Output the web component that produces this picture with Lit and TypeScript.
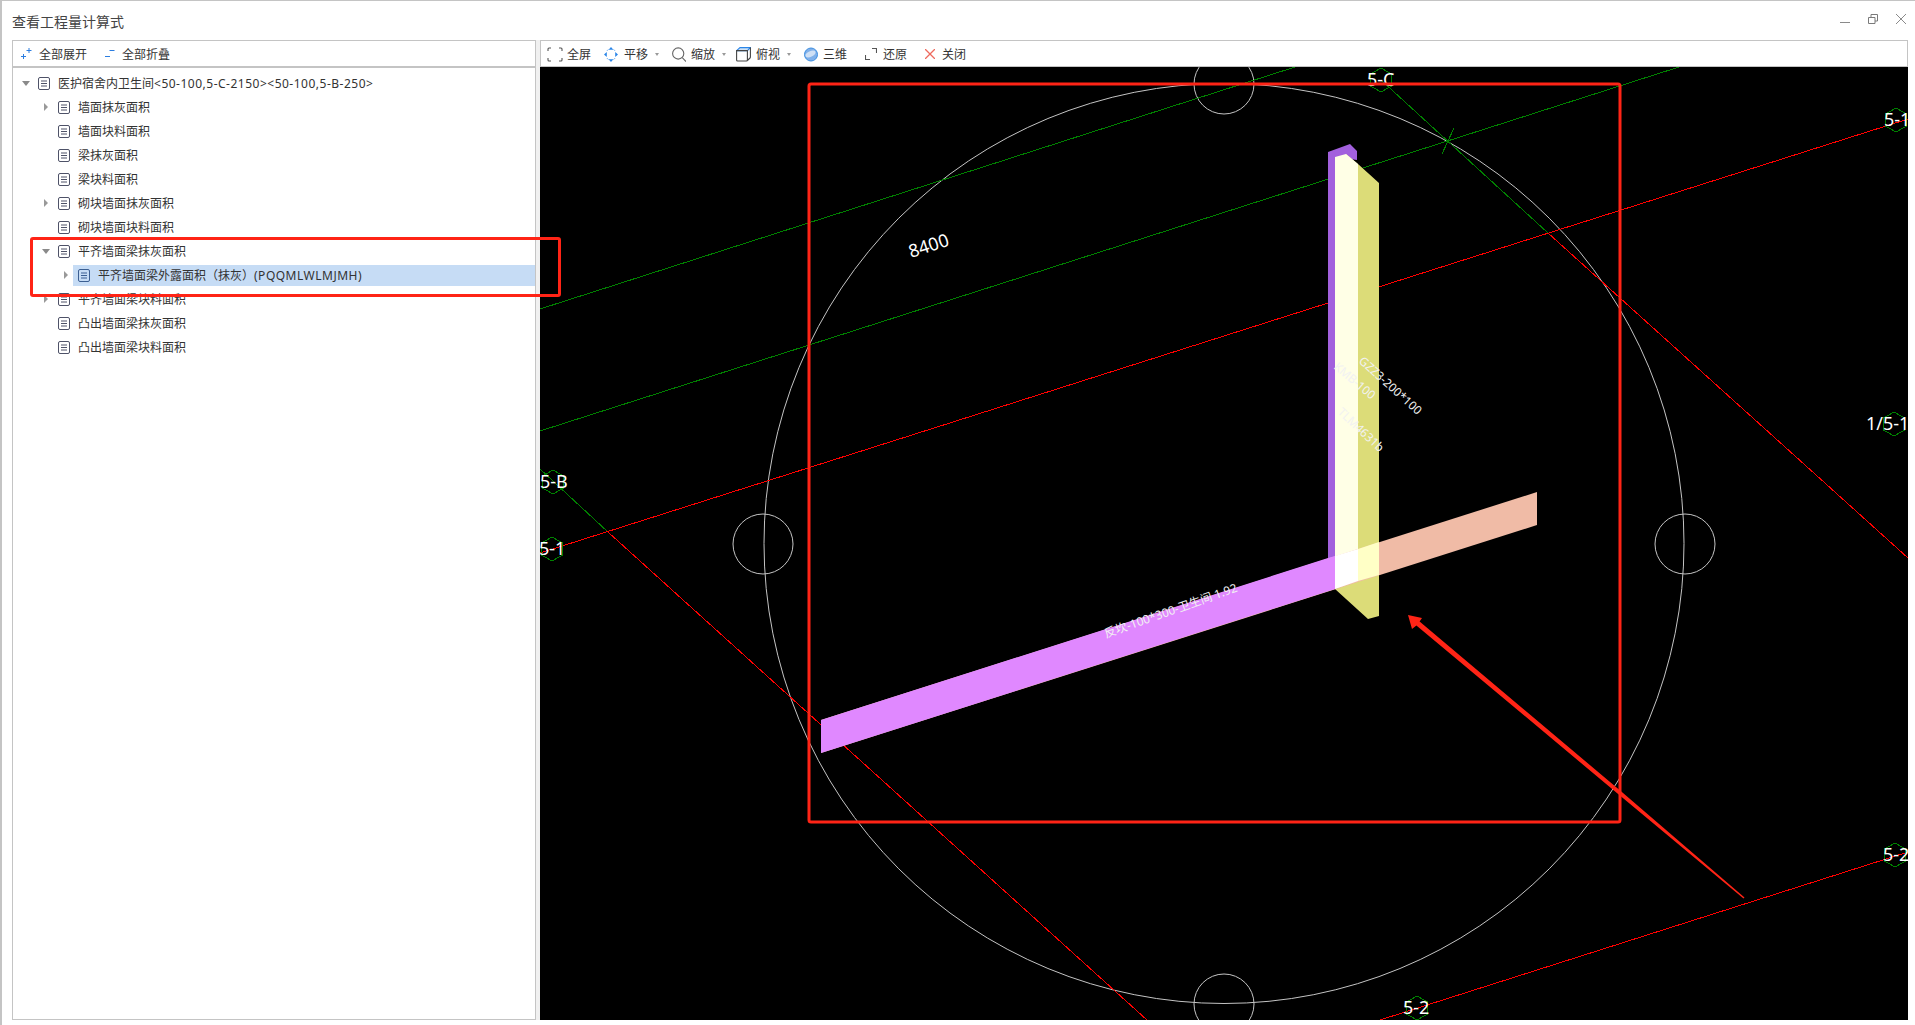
import { LitElement, css, html, svg } from "lit";
import { customElement } from "lit/decorators.js";

interface TreeNode {
  label: string;
  depth: number;
  arrow?: "open" | "closed";
  selected?: boolean;
}

const TREE: TreeNode[] = [
  { label: "医护宿舍内卫生间<50-100,5-C-2150><50-100,5-B-250>", depth: 0, arrow: "open" },
  { label: "墙面抹灰面积", depth: 1, arrow: "closed" },
  { label: "墙面块料面积", depth: 1 },
  { label: "梁抹灰面积", depth: 1 },
  { label: "梁块料面积", depth: 1 },
  { label: "砌块墙面抹灰面积", depth: 1, arrow: "closed" },
  { label: "砌块墙面块料面积", depth: 1 },
  { label: "平齐墙面梁抹灰面积", depth: 1, arrow: "open" },
  { label: "平齐墙面梁外露面积（抹灰）(PQQMLWLMJMH)", depth: 2, arrow: "closed", selected: true },
  { label: "平齐墙面梁块料面积", depth: 1, arrow: "closed" },
  { label: "凸出墙面梁抹灰面积", depth: 1 },
  { label: "凸出墙面梁块料面积", depth: 1 },
];

const ICONS = {
  expand: html`<svg width="11" height="12" viewBox="0 0 11 12" fill="none" stroke="#2b7de0"><path d="M5.500 2.500h5M8 0v5M0 8.500h5M2.500 6v5"/></svg>`,
  collapse: html`<svg width="10" height="12" viewBox="0 0 10 12" fill="none" stroke="#2b7de0"><path d="M4.500 2.500h5M0 8.500h5"/></svg>`,
  full: html`<svg width="16" height="15" viewBox="0 0 16 15" fill="none" stroke="#555" stroke-width="1.100"><path d="M1 4V2q0-1 1-1h2M12 1h2q1 0 1 1v2M15 11v2q0 1-1 1h-2M4 14H2q-1 0-1-1v-2"/></svg>`,
  pan: html`<svg width="14" height="15" viewBox="0 0 14 15"><path d="M7 0l2.400 2.800H4.600zM7 15l-2.400-2.800h4.800zM0 7.500l2.800-2.400v4.800zM14 7.500l-2.800 2.400V5.100z" fill="#2b86e8"/><path d="M3.200 3.600l1-1M9.800 2.600l1 1M3.200 11.400l1 1M9.800 12.400l1-1" stroke="#2b86e8" fill="none"/></svg>`,
  zoom: html`<svg width="14" height="15" viewBox="0 0 14 15" fill="none" stroke="#666" stroke-width="1.100"><circle cx="6.200" cy="6.500" r="5.600"/><path d="M10.300 10.700L14 14.500"/></svg>`,
  cube: html`<svg width="15" height="15" viewBox="0 0 15 15" fill="none" stroke-width="1.100"><path d="M4 .6h10.400l-3 3H.6z" fill="#cfe2f6" stroke="#2b86e8"/><path d="M.6 3.600h10.800V13q0 1-1 1H1.600q-1 0-1-1z" stroke="#444"/><path d="M14.400 .6V10q0 .6-.4 1l-2.600 2.500" stroke="#444"/></svg>`,
  sphere: html`<svg width="14" height="15" viewBox="0 0 14 15"><circle cx="7" cy="7.500" r="6.500" fill="#7fb0ea" stroke="#3d8ee0"/><ellipse cx="6.500" cy="7" rx="5.500" ry="2.800" transform="rotate(-25 6.500 7)" fill="#cfe0f5"/></svg>`,
  restore: html`<svg width="12" height="12" viewBox="0 0 12 12" fill="none" stroke="#555" stroke-width="1.100"><path d="M.5 7v4.500h4.500M7 .5h4.500V5"/></svg>`,
  close: html`<svg width="10" height="10" viewBox="0 0 10 10" fill="none" stroke="#ee6a5e" stroke-width="1.300"><path d="M0 0l10 10M10 0L0 10"/></svg>`,
};

const TOOLS: { label: string; icon: unknown; caret?: boolean; cls: string }[] = [
  { label: "全屏", icon: ICONS.full, cls: "t-full" },
  { label: "平移", icon: ICONS.pan, caret: true, cls: "t-pan" },
  { label: "缩放", icon: ICONS.zoom, caret: true, cls: "t-zoom" },
  { label: "俯视", icon: ICONS.cube, caret: true, cls: "t-cube" },
  { label: "三维", icon: ICONS.sphere, cls: "t-sphere" },
  { label: "还原", icon: ICONS.restore, cls: "t-restore" },
  { label: "关闭", icon: ICONS.close, cls: "t-close" },
];

// axis bubbles: page coordinates of the centre, text anchor x
const AXES: { x: number; y: number; r: number; label: string; tx: number }[] = [
  { x: 1381, y: 80, r: 12, label: "5-C", tx: 1367 },
  { x: 1896, y: 120, r: 12, label: "5-1", tx: 1884 },
  { x: 1894, y: 424, r: 12, label: "1/5-1", tx: 1866 },
  { x: 553, y: 482, r: 12, label: "5-B", tx: 540 },
  { x: 552, y: 549, r: 12, label: "5-1", tx: 539 },
  { x: 1895, y: 855, r: 12, label: "5-2", tx: 1883 },
  { x: 1417, y: 1008, r: 12, label: "5-2", tx: 1403 },
];

function hexagon(cx: number, cy: number, r: number) {
  const pts: string[] = [];
  for (let i = 0; i < 6; i++) {
    const a = (Math.PI / 3) * i + Math.PI / 2;
    pts.push(`${cx + r * Math.cos(a)},${cy + r * Math.sin(a)}`);
  }
  return pts.join(" ");
}

// the latin runs of a label are set a little wider than the CJK ones
function labelRuns(text: string) {
  return text
    .split(/([\x21-\x7e]+)/)
    .map((part) => (/^[\x21-\x7e]+$/.test(part) ? html`<span class="latin">${part}</span>` : part));
}

@customElement("app-root")
export class AppRoot extends LitElement {
  private renderRow(n: TreeNode) {
    return html`
      <div class="row" style="padding-left:${6 + n.depth * 20}px">
        <span class="arrow ${n.arrow ?? ""}"></span>
        <div class="content ${n.selected ? "selected" : ""}">
          <svg class="doc" width="12" height="13" viewBox="0 0 12 13" fill="none" stroke="${n.selected ? "#3c5f92" : "#4e5268"}">
            <rect x=".5" y=".5" width="11" height="12" rx="1.500" />
            <path d="M3 4h6M3 6.500h6M3 9h6" />
          </svg>
          <span class="label">${labelRuns(n.label)}</span>
        </div>
      </div>
    `;
  }

  private renderScene() {
    return svg`
      <g fill="none" stroke-width="1">
        <circle cx="1224" cy="543.500" r="460" stroke="#c4c4c4" />
        <circle cx="763" cy="544" r="30" stroke="#c4c4c4" />
        <circle cx="1685" cy="544" r="30" stroke="#c4c4c4" />
        <circle cx="1224" cy="84" r="30" stroke="#c4c4c4" />
        <circle cx="1224" cy="1004" r="30" stroke="#c4c4c4" />

        <g shape-rendering="crispEdges">
          <path d="M540 309L1295 67M540 431L1679 67M540 469L608 532M1381 80L1548 233M1442 154L1454 128" stroke="#008000" />
          <path d="M540 553L1908 119M608 532L1147 1020M1548 233L1908 558M1380 1020L1908 852" stroke="#ff0000" />
        </g>
      </g>

      ${AXES.map(
        (a) => svg`
          <polygon points=${hexagon(a.x, a.y, a.r)} fill="none" stroke="#008000" shape-rendering="crispEdges" />
          <text class="axis" x=${a.tx} y=${a.y + 6}>${a.label}</text>
        `
      )}

      <polygon points="1328,152 1350,144 1357,151 1357,160 1335,157 1335,589 1328,585" fill="#a260dd" />
      <polygon points="1346,154 1358,164 1379,183 1379,616 1368,619 1335,589 1358,581" fill="#dcdc78" />
      <polygon points="1335,157 1346,154 1358,164 1358,581 1335,589" fill="#ffffe6" />

      <polygon points="821,720 1537,492 1537,525 821,753" fill="#f0bba6" />
      <polygon points="821,720 1328,558 1335,556 1335,589 821,753" fill="#e088ff" />
      <polygon points="1335,556 1358,549 1358,581 1335,589" fill="#ffffff" />
      <polygon points="1358,549 1379,542 1379,575 1358,581" fill="#ffffc6" />

      <text class="dim" transform="translate(911 258) rotate(-18)">8400</text>
      <text class="tag" transform="translate(1358 362) rotate(42)">GZZ3-200*100</text>
      <text class="tag" transform="translate(1333 368) rotate(40)">KMB-100</text>
      <text class="tag" transform="translate(1337 413) rotate(43)">TLM4631b</text>
      <text class="tag" transform="translate(1106 638) rotate(-19.500)">反坎-100*300-卫生间 1.92</text>

      <rect x="809" y="84" width="811" height="738" rx="2" fill="none" stroke="#ff2416" stroke-width="3" />
      <polygon
        points="1408,615 1422,618 1419.600,621.600 1621.300,791.500 1744.500,897.500 1743.500,898.500 1618.700,794.500 1416.400,625.400 1412,629"
        fill="#ff2416"
      />
    `;
  }

  render() {
    return html`
      <div class="window">
        <header class="titlebar">
          <span class="title">查看工程量计算式</span>
          <div class="controls">
            <svg width="10" height="10" viewBox="0 0 10 10"><path d="M0 8.500h10" stroke="#8a8a8a" /></svg>
            <svg width="10" height="10" viewBox="0 0 10 10" fill="none" stroke="#7a7a7a"><path d="M3 3V.500h6.500V7H7M.5 3.500H7v6H.5z" /></svg>
            <svg width="10" height="10" viewBox="0 0 10 10" fill="none" stroke="#8a8a8a"><path d="M0 0l10 10M10 0L0 10" /></svg>
          </div>
        </header>
        <div class="body">
          <section class="panel left">
            <div class="toolbar">
              <button class="tool expand">${ICONS.expand}<span>全部展开</span></button>
              <button class="tool collapse">${ICONS.collapse}<span>全部折叠</span></button>
            </div>
            <div class="tree">${TREE.map((n) => this.renderRow(n))}</div>
          </section>
          <div class="splitter"></div>
          <section class="panel right">
            <div class="toolbar">
              ${TOOLS.map(
                (t) => html`<button class="tool ${t.cls}">
                  ${t.icon}<span>${t.label}</span>${t.caret ? html`<i class="caret"></i>` : ""}
                </button>`
              )}
            </div>
            <svg class="canvas" viewBox="540 67 1368 953" width="1368" height="953">${this.renderScene()}</svg>
          </section>
        </div>
        <div class="callout"></div>
      </div>
    `;
  }

  static styles = css`
    :host {
      display: block;
      width: 1915px;
      height: 1025px;
      background: #fff;
      font-family: "Noto Sans", "Noto Sans CJK SC", sans-serif;
      font-size: 12px;
      color: #333;
      overflow: hidden;
    }
    .window {
      position: relative;
      box-sizing: border-box;
      height: 1025px;
      border-top: 1px solid #c4c4c4;
      border-left: 2px solid #c4c4c4;
      display: flex;
      flex-direction: column;
    }
    .titlebar {
      height: 39px;
      flex: none;
      display: flex;
      align-items: center;
      justify-content: space-between;
      padding: 0 9px 0 10px;
    }
    .title {
      font-size: 14px;
      color: #444;
    }
    .controls {
      display: flex;
      align-items: center;
      gap: 18px;
      margin-top: -3px;
    }
    .body {
      display: flex;
      padding-left: 10px;
      height: 980px;
    }
    .panel {
      box-sizing: border-box;
      display: flex;
      flex-direction: column;
    }
    .left {
      width: 524px;
      border: 1px solid #c4c4c4;
    }
    .splitter {
      width: 4px;
      flex: none;
      background: #f0f0f0;
    }
    .right {
      width: 1368px;
    }
    .toolbar {
      flex: none;
      display: flex;
      align-items: center;
      height: 24px;
      padding-top: 1px;
    }
    .left .toolbar {
      border-bottom: 2px solid #c4c4c4;
      padding-left: 8px;
    }
    .right .toolbar {
      border: 1px solid #c4c4c4;
      padding-left: 6px;
    }
    .tool {
      all: unset;
      display: inline-flex;
      align-items: center;
      white-space: nowrap;
    }
    .tool svg {
      flex: none;
    }
    .expand {
      gap: 7px;
      margin-right: 18px;
    }
    .collapse {
      gap: 7px;
    }
    .t-full {
      gap: 4px;
      margin-right: 13px;
    }
    .t-pan {
      gap: 6px;
      margin-right: 13px;
    }
    .t-zoom {
      gap: 5px;
      margin-right: 10px;
    }
    .t-cube {
      gap: 5px;
      margin-right: 13px;
    }
    .t-sphere {
      gap: 5px;
      margin-right: 18px;
    }
    .t-restore {
      gap: 6px;
      margin-right: 18px;
    }
    .t-close {
      gap: 7px;
    }
    .caret {
      width: 0;
      height: 0;
      margin-left: 1px;
      border: 2.5px solid transparent;
      border-top: 3px solid #999;
      border-bottom: 0;
    }
    .t-zoom .caret,
    .t-cube .caret {
      margin-left: 2px;
    }
    .canvas {
      display: block;
      background: #000;
      flex: none;
    }
    .tree {
      padding-top: 3px;
    }
    .row {
      height: 24px;
      display: flex;
      align-items: center;
    }
    .arrow {
      width: 14px;
      height: 14px;
      flex: none;
      display: flex;
      align-items: center;
      justify-content: center;
    }
    .arrow.closed::before {
      content: "";
      border-left: 4px solid #999;
      border-top: 4px solid transparent;
      border-bottom: 4px solid transparent;
    }
    .arrow.open::before {
      content: "";
      border-top: 5px solid #8a8a8a;
      border-left: 4px solid transparent;
      border-right: 4px solid transparent;
    }
    .content {
      flex: 1;
      height: 21px;
      display: flex;
      align-items: center;
      padding-left: 5px;
      gap: 8px;
      white-space: nowrap;
    }
    .content.selected {
      background: #c6dcf5;
    }
    .doc {
      flex: none;
    }
    .latin {
      letter-spacing: 0.5px;
    }
    .axis {
      fill: #fff;
      font-size: 18px;
    }
    .dim {
      fill: #fff;
      font-size: 18px;
    }
    .tag {
      fill: #f2f2f2;
      font-size: 11.8px;
    }
    .callout {
      position: absolute;
      left: 28px;
      top: 236px;
      width: 525px;
      height: 54px;
      border: 3px solid #ff2416;
      border-radius: 3px;
      pointer-events: none;
    }
  `;
}
